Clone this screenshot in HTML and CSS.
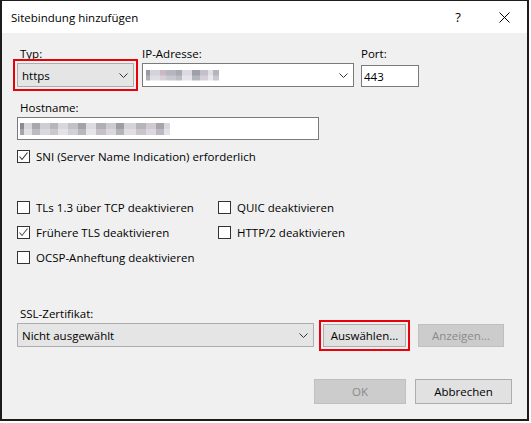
FILE: index.html
```html
<!DOCTYPE html>
<html>

<head>
  <meta charset="UTF-8">
  <title>Sitebindung hinzufügen</title>
  <link rel="stylesheet" href="styles.css">
</head>

<body>
  <div class="window">
    <div class="titlebar">
      <span class="title">Sitebindung hinzufügen</span>
      <span class="tbtn help">?</span>
      <span class="tbtn close">
        <svg width="11" height="11" viewBox="0 0 11 11"><path d="M0.5 0.5 L10.5 10.5 M10.5 0.5 L0.5 10.5" stroke="#000" stroke-width="1" fill="none"/></svg>
      </span>
    </div>

    <div class="content">
      <!-- Typ / IP / Port -->
      <div class="row-top">
        <div class="field">
          <div class="lbl">Typ:</div>
          <div class="combo combo-type marked">
            <span class="val">https</span>
            <svg class="chev" width="9" height="5" viewBox="0 0 9 5"><polyline points="0.5,0.5 4.5,4.5 8.5,0.5" stroke="#333" fill="none"/></svg>
          </div>
        </div>
        <div class="field field-ip">
          <div class="lbl flush">IP-Adresse:</div>
          <div class="combo combo-edit combo-ip">
            <span class="val"><span class="blur blur-ip"></span></span>
            <svg class="chev" width="9" height="5" viewBox="0 0 9 5"><polyline points="0.5,0.5 4.5,4.5 8.5,0.5" stroke="#333" fill="none"/></svg>
          </div>
        </div>
        <div class="field field-port">
          <div class="lbl flush">Port:</div>
          <div class="textbox port">443</div>
        </div>
      </div>

      <!-- Hostname -->
      <div class="field host">
        <div class="lbl">Hostname:</div>
        <div class="textbox host-box"><span class="blur blur-host"></span></div>
      </div>

      <div class="check sni">
        <span class="box"><svg width="11" height="11" viewBox="0 0 11 11"><polyline points="1.5,5.5 4,8.5 9.5,1.5" stroke="#333" stroke-width="1.1" fill="none"/></svg></span>
        SNI (Server Name Indication) erforderlich
      </div>

      <!-- Optionen -->
      <div class="options">
        <div class="check"><span class="box"></span>TLs 1.3 über TCP deaktivieren</div>
        <div class="check"><span class="box"></span>QUIC deaktivieren</div>
        <div class="check"><span class="box"><svg width="11" height="11" viewBox="0 0 11 11"><polyline points="1.5,5.5 4,8.5 9.5,1.5" stroke="#555" stroke-width="1.1" fill="none"/></svg></span>Frühere TLS deaktivieren</div>
        <div class="check"><span class="box"></span>HTTP/2 deaktivieren</div>
        <div class="check"><span class="box"></span>OCSP-Anheftung deaktivieren</div>
      </div>

      <!-- Zertifikat -->
      <div class="ssl">
        <div class="lbl">SSL-Zertifikat:</div>
        <div class="ssl-row">
          <div class="combo combo-cert">
            <span class="val">Nicht ausgewählt</span>
            <svg class="chev" width="9" height="5" viewBox="0 0 9 5"><polyline points="0.5,0.5 4.5,4.5 8.5,0.5" stroke="#333" fill="none"/></svg>
          </div>
          <div class="btn btn-select marked">Auswählen...</div>
          <div class="btn btn-view disabled">Anzeigen...</div>
        </div>
      </div>

      <div class="footer">
        <div class="btn btn-ok disabled">OK</div>
        <div class="btn btn-cancel">Abbrechen</div>
      </div>
    </div>
  </div>
</body>

</html>
```

FILE: styles.css
```css
body {
  margin: 0;
  background: #fff;
  font-family: "Segoe UI", "Open Sans", sans-serif;
  font-size: 11.5px;
  color: #000;
}

.window {
  width: 525px;
  height: 418px;
  border-style: solid;
  border-color: #1c1c1c;
  border-width: 1px 2px 2px 2px;
  background: #f0f0f0;
  display: flex;
  flex-direction: column;
}

.titlebar {
  height: 32px;
  background: #fff;
  display: flex;
  align-items: center;
}

.title {
  flex: 1;
  padding-left: 9px;
  font-size: 11.5px;
}

.tbtn {
  width: 46px;
  height: 32px;
  display: flex;
  align-items: center;
  justify-content: center;
}

.help {
  font-size: 13px;
}

.content {
  padding: 13px 0 0 15px;
}

.lbl {
  height: 15px;
  line-height: 15px;
  margin-bottom: 2px;
  padding-left: 3px;
}

.lbl.flush {
  padding-left: 0;
}

.row-top {
  display: flex;
  align-items: flex-start;
}

.field-ip {
  margin-left: 8px;
}

.field-port {
  margin-left: 7px;
}

.field-port .lbl {
  margin-bottom: 4px;
}

.combo {
  box-sizing: border-box;
  height: 24px;
  border: 1px solid #adadad;
  background: #e5e5e5;
  display: flex;
  align-items: center;
  padding: 0 5px 0 4px;
}

.val {
  flex: 1;
  display: flex;
  align-items: center;
}

.combo-edit {
  background: #fff;
  border-color: #7a7a7a;
  padding-left: 3px;
}

.combo-type {
  width: 117px;
}

.combo-ip {
  width: 212px;
}

.marked {
  outline: 2px solid #e8000b;
  outline-offset: 2px;
}

.textbox {
  box-sizing: border-box;
  height: 23px;
  border: 1px solid #7a7a7a;
  background: #fff;
  display: flex;
  align-items: center;
  padding-left: 2px;
}

.port {
  width: 58px;
  height: 22px;
}

.host {
  margin-top: 13px;
}

.host-box {
  width: 302px;
}

.blur {
  height: 11px;
  background-repeat: no-repeat;
  background-size: 100% 50%;
  background-position: top, bottom;
}

.blur-ip {
  width: 73px;
  background-image:
    linear-gradient(90deg, #9a9aa4 0 4px, #d4d2da 4px 14px, #c9b9c3 14px 20px, #b4b5be 20px 30px, #a8a9b2 30px 36px, #dcd9e0 36px 46px, #9da0a8 46px 54px, #c4c0c9 54px 62px, #e2dfe4 62px 67px, #b6b4bc 67px 73px),
    linear-gradient(90deg, #b0aeb6 0 4px, #e0dee4 4px 14px, #d9cfd6 14px 20px, #c7c8d0 20px 30px, #bbbcc4 30px 36px, #e6e4ea 36px 46px, #b3b6be 46px 54px, #d3d0d8 54px 62px, #ece9ee 62px 67px, #cac8ce 67px 73px);
}

.blur-host {
  width: 150px;
  height: 12px;
  background-image:
    linear-gradient(90deg, #8c8a90 0 4px, #d7d4da 4px 12px, #a9a7ae 12px 20px, #cfccd3 20px 30px, #b8b6bd 30px 38px, #d9d6dc 38px 48px, #c3c1c8 48px 58px, #a4a2a9 58px 66px, #dedbe0 66px 76px, #b1aeb5 76px 86px, #cdcad0 86px 96px, #9f9da4 96px 104px, #d5d3d8 104px 116px, #b6b3ba 116px 126px, #cfcad2 126px 136px, #a7a5ac 136px 144px, #dad8dd 144px 150px),
    linear-gradient(90deg, #a6a4aa 0 4px, #e2e0e5 4px 12px, #bdbbc2 12px 20px, #dbd8de 20px 30px, #cac8ce 30px 38px, #e4e2e7 38px 48px, #d2d0d6 48px 58px, #b9b7be 58px 66px, #e6e4e8 66px 76px, #c4c2c8 76px 86px, #dad7dd 86px 96px, #b5b3ba 96px 104px, #e0dee3 104px 116px, #c8c6cc 116px 126px, #dcd8df 126px 136px, #bcbac0 136px 144px, #e4e2e6 144px 150px);
}

.check {
  display: flex;
  align-items: center;
  height: 13px;
}

.box {
  box-sizing: border-box;
  width: 13px;
  height: 13px;
  border: 1px solid #333;
  background: #fff;
  margin-right: 6px;
  display: flex;
  align-items: center;
  justify-content: center;
}

.sni {
  margin-top: 10px;
}

.options {
  margin-top: 38px;
  display: grid;
  grid-template-columns: 201px auto;
  row-gap: 12px;
}

.ssl {
  margin-top: 42px;
}

.ssl-row {
  display: flex;
  align-items: center;
}

.combo-cert {
  width: 297px;
}

.btn {
  box-sizing: border-box;
  height: 23px;
  border: 1px solid #adadad;
  background: #e1e1e1;
  display: flex;
  align-items: center;
  justify-content: center;
}

.btn.disabled {
  background: #cccccc;
  border-color: #bfbfbf;
  color: #8a8a8a;
}

.btn-select {
  width: 83px;
  margin-left: 9px;
}

.btn-view {
  width: 86px;
  margin-left: 12px;
}

.footer {
  margin-top: 32px;
  display: flex;
  justify-content: flex-end;
  padding-right: 15px;
}

.btn-ok {
  width: 92px;
  height: 25px;
}

.btn-cancel {
  width: 97px;
  height: 25px;
  margin-left: 9px;
}
```
